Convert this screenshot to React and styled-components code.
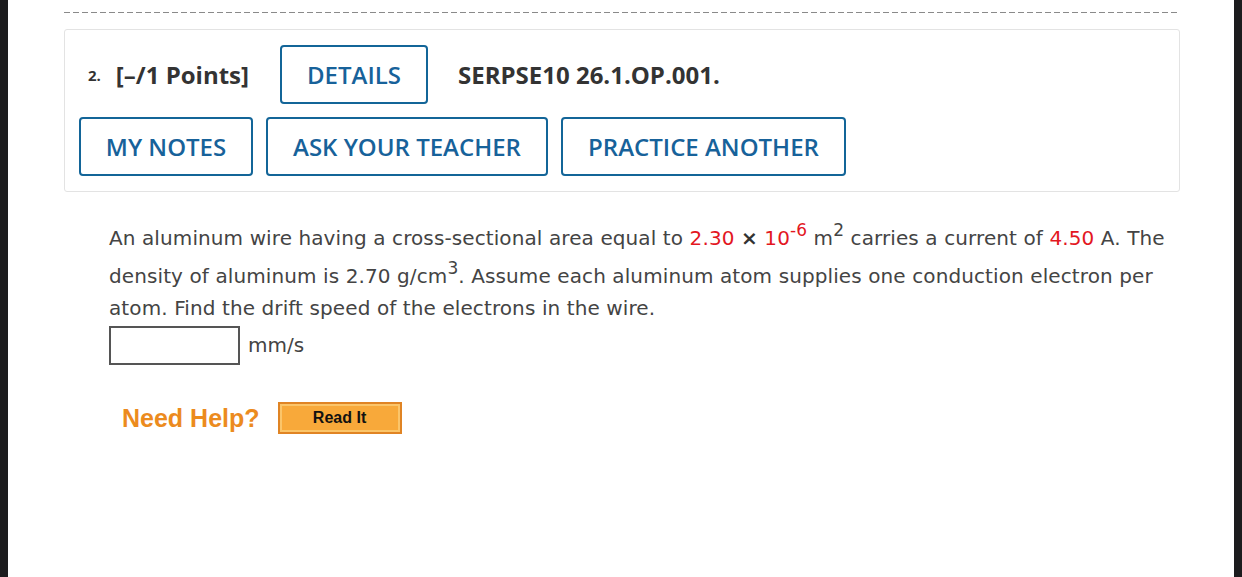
import React from "react";
import styled, { createGlobalStyle } from "styled-components";

const GlobalStyle = createGlobalStyle`
  html, body {
    margin: 0;
    padding: 0;
    background: #1c1c1e;
  }
`;

function App() {
  return (
    <>
      <GlobalStyle />
      <Page>
        <DashLine />
        <Panel>
          <HeaderRow>
            <Number>2.</Number>
            <Points>[–/1 Points]</Points>
            <OutlineBtn $w={148}>DETAILS</OutlineBtn>
            <Code>SERPSE10 26.1.OP.001.</Code>
          </HeaderRow>
          <ActionRow>
            <OutlineBtn $w={174}>MY NOTES</OutlineBtn>
            <OutlineBtn $w={282}>ASK YOUR TEACHER</OutlineBtn>
            <OutlineBtn $w={285}>PRACTICE ANOTHER</OutlineBtn>
          </ActionRow>
        </Panel>
        <Question>
          <Prose>
            An aluminum wire having a cross-sectional area equal to{" "}
            <Red>2.30</Red> <Times>×</Times> <Red>10</Red>
            <Sup $red>-6</Sup> m<Sup>2</Sup> carries a current of{" "}
            <Red>4.50</Red> A. The density of aluminum is 2.70 g/cm
            <Sup>3</Sup>. Assume each aluminum atom supplies one conduction
            electron per atom. Find the drift speed of the electrons in the
            wire.
          </Prose>
          <AnswerRow>
            <AnswerBox type="text" />
            <Unit>mm/s</Unit>
          </AnswerRow>
          <HelpRow>
            <HelpLabel>Need Help?</HelpLabel>
            <ReadIt>Read It</ReadIt>
          </HelpRow>
        </Question>
      </Page>
    </>
  );
}

export default App;

const Page = styled.div`
  margin: 0 8px;
  min-height: 100vh;
  background: #ffffff;
  padding: 12px 54px 0 56px;
  box-sizing: border-box;
`;

const DashLine = styled.div`
  height: 1px;
  background: repeating-linear-gradient(
    to right,
    #8a8a8a 0 6px,
    transparent 6px 9px
  );
`;

const Panel = styled.div`
  margin-top: 16px;
  border: 1px solid #e3e3e3;
  border-radius: 3px;
  padding: 15px 14px 15px 14px;
  display: flex;
  flex-direction: column;
  gap: 13px;
  font-family: "Open Sans", "Liberation Sans", sans-serif;
`;

const HeaderRow = styled.div`
  display: flex;
  align-items: center;
  padding-left: 9px;
  height: 59px;
`;

const Number = styled.span`
  font-size: 15px;
  font-weight: 700;
  color: #333;
  margin-right: 15px;
`;

const Points = styled.span`
  font-size: 24px;
  font-weight: 700;
  color: #333;
  margin-right: 31px;
`;

const Code = styled.span`
  font-size: 24px;
  font-weight: 700;
  color: #333;
  margin-left: 30px;
`;

const ActionRow = styled.div`
  display: flex;
  gap: 13px;
`;

const OutlineBtn = styled.button`
  width: ${(p) => p.$w}px;
  height: 59px;
  box-sizing: border-box;
  border: 2px solid #136598;
  border-radius: 4px;
  background: #fff;
  color: #17629a;
  font-family: "Open Sans", "Liberation Sans", sans-serif;
  font-size: 24px;
  font-weight: 600;
  padding: 0;
  cursor: pointer;
`;

const Question = styled.div`
  padding: 24px 0 0 45px;
  font-family: Verdana, "DejaVu Sans", sans-serif;
  color: #444;
`;

const Prose = styled.p`
  margin: 0;
  font-size: 20px;
  line-height: 32px;
  letter-spacing: 0.1px;
`;

const Red = styled.span`
  color: #e3171f;
`;

const Times = styled.span`
  color: #333;
  font-weight: 700;
`;

const Sup = styled.sup`
  font-size: 17px;
  line-height: 29px;
  vertical-align: 9px;
  color: ${(p) => (p.$red ? "#e3171f" : "inherit")};
`;

const AnswerRow = styled.div`
  display: flex;
  align-items: center;
  margin-top: 2px;
  gap: 8px;
`;

const AnswerBox = styled.input`
  width: 131px;
  height: 39px;
  box-sizing: border-box;
  border: 2px solid #555;
  margin: 0;
`;

const Unit = styled.span`
  font-size: 20px;
  margin-top: -2px;
`;

const HelpRow = styled.div`
  display: flex;
  align-items: center;
  padding: 37px 0 0 13px;
  gap: 18px;
`;

const HelpLabel = styled.span`
  font-family: "Liberation Sans", Arial, sans-serif;
  font-size: 25px;
  font-weight: 700;
  color: #ec8b1e;
`;

const ReadIt = styled.button`
  width: 124px;
  height: 32px;
  box-sizing: border-box;
  background: #f8a93a;
  border: 2px solid #e08424;
  box-shadow: inset 0 0 0 2px #fbc56a;
  color: #111;
  font-family: "Liberation Sans", Arial, sans-serif;
  font-size: 16px;
  font-weight: 700;
  padding: 0;
`;
